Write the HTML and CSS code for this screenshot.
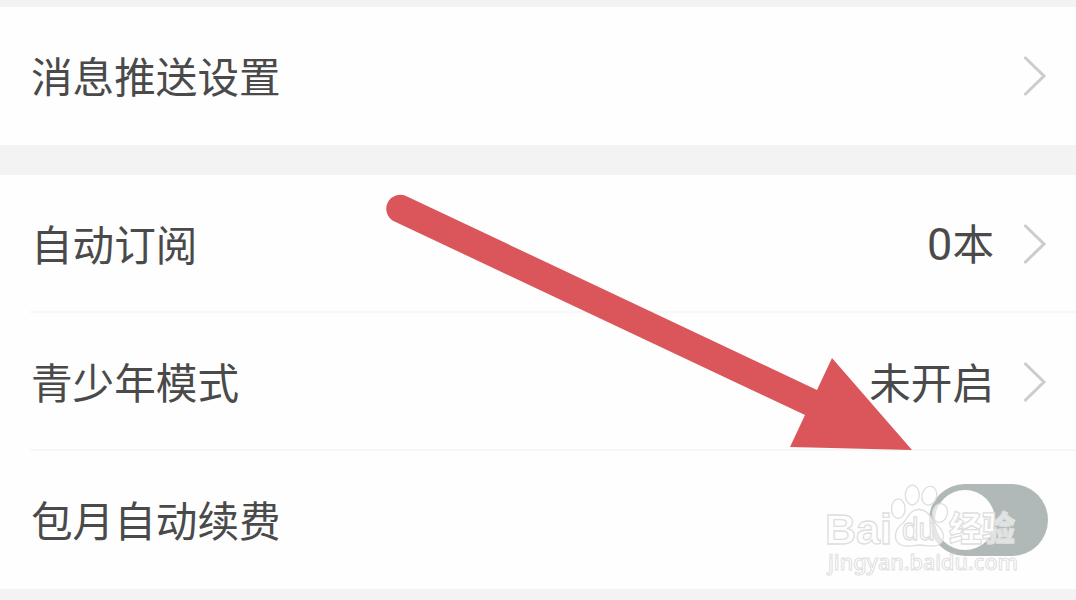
FILE: index.html
```
<!DOCTYPE html>
<html lang="zh-CN">
<head>
    <meta charset="UTF-8">
    <meta name="viewport" content="width=device-width, initial-scale=1.0">
    <title>设置</title>
    <link rel="stylesheet" href="styles.css">
</head>
<body>

    <div class="group">
        <div class="row">
            <span class="label">消息推送设置</span>
            <svg class="chevron" viewBox="0 0 24 42"><path d="M1.5 2 L21 21 L1.5 40"/></svg>
        </div>
    </div>

    <div class="group">
        <div class="row">
            <span class="label">自动订阅</span>
            <span class="value"><span class="count">0</span>本</span>
            <svg class="chevron" viewBox="0 0 24 42"><path d="M1.5 2 L21 21 L1.5 40"/></svg>
        </div>
        <div class="row">
            <span class="label">青少年模式</span>
            <span class="value">未开启</span>
            <svg class="chevron" viewBox="0 0 24 42"><path d="M1.5 2 L21 21 L1.5 40"/></svg>
        </div>
        <div class="row">
            <span class="label">包月自动续费</span>
            <div class="switch"><div class="knob"></div></div>
        </div>
    </div>

    <!-- 指示箭头 -->
    <svg class="arrow" viewBox="0 0 530 260">
        <path d="M26 6 L437 200 L452 168 L532 260 L410 257 L425 225 L14.500 31.500 A13.900 13.900 0 0 1 26 6 Z"/>
    </svg>

    <!-- 水印 -->
    <svg class="watermark" viewBox="0 0 210 100">
        <text class="brand" x="2" y="64" textLength="67" lengthAdjust="spacingAndGlyphs">Bai</text>
        <g class="paw">
            <ellipse cx="75.300" cy="28.700" rx="6.800" ry="9.800"/>
            <ellipse cx="89.300" cy="15" rx="7" ry="9.800"/>
            <ellipse cx="106.300" cy="15.700" rx="7.300" ry="9.500" transform="rotate(14 106.300 15.700)"/>
            <ellipse cx="117" cy="33" rx="7.300" ry="9.500" transform="rotate(14 117 33)"/>
            <path d="M96 29.500 C86 29.500 85 39 79 44 C71 50 70 61 78 65 C84 67.500 91 65 97 65 C103 65 109 67.500 115 65 C122 61 122 53 116 47 C108 40 106 29.500 96 29.500 Z"/>
        </g>
        <text class="du" x="79" y="60" textLength="33" lengthAdjust="spacingAndGlyphs">du</text>
        <text class="cn" x="126" y="61" textLength="66" lengthAdjust="spacingAndGlyphs">经验</text>
        <text class="site" x="5" y="90" textLength="190" lengthAdjust="spacingAndGlyphs">jingyan.baidu.com</text>
    </svg>

</body>
</html>
```
FILE: styles.css
```
* {
    margin: 0;
    padding: 0;
    box-sizing: border-box;
}

body {
    font-family: 'Noto Sans CJK SC', sans-serif;
    background-color: #f3f3f3;
    color: #4a4a4a;
    height: 600px;
    overflow: hidden;
    padding-top: 7px;
}

.group {
    background-color: #fefefe;
    margin-bottom: 30px;
}

.row {
    position: relative;
    display: flex;
    align-items: center;
    height: 138px;
    padding: 0 29px 0 31px;
    font-size: 41.6px;
    line-height: 60px;
}

.row + .row::before {
    content: '';
    position: absolute;
    top: -2px;
    left: 30px;
    right: 0;
    height: 2px;
    background-color: #f7f7f7;
}

.label {
    flex: 1;
    margin-bottom: 2px;
}

.value {
    margin-right: 29px;
    margin-bottom: 2px;
}

.count {
    font-family: Roboto, sans-serif;
    font-size: 45px;
}

.chevron {
    width: 24px;
    height: 42px;
    fill: none;
    stroke: #cccccc;
    stroke-width: 3;
}

.switch {
    width: 119px;
    height: 72px;
    margin-right: -1px;
    padding: 6px;
    border-radius: 36px;
    background-color: #b1b9b8;
}

.knob {
    width: 60px;
    height: 60px;
    border-radius: 50%;
    background-color: #fefefe;
}

.arrow {
    position: absolute;
    left: 380px;
    top: 190px;
    width: 530px;
    height: 260px;
    overflow: visible;
    fill: #db565b;
}

.watermark {
    position: absolute;
    left: 823px;
    top: 480px;
    width: 210px;
    height: 100px;
    fill: rgba(255, 255, 255, 0.65);
    stroke: #dedede;
    stroke-width: 1.3;
}

.brand {
    font: bold 43px 'Liberation Sans', sans-serif;
}

.du {
    font: 31px 'Liberation Sans', sans-serif;
}

.cn {
    font: 900 34px 'Noto Sans CJK SC', sans-serif;
}

.site {
    font: 500 22px 'Noto Sans', sans-serif;
    stroke-width: 1;
}
```
